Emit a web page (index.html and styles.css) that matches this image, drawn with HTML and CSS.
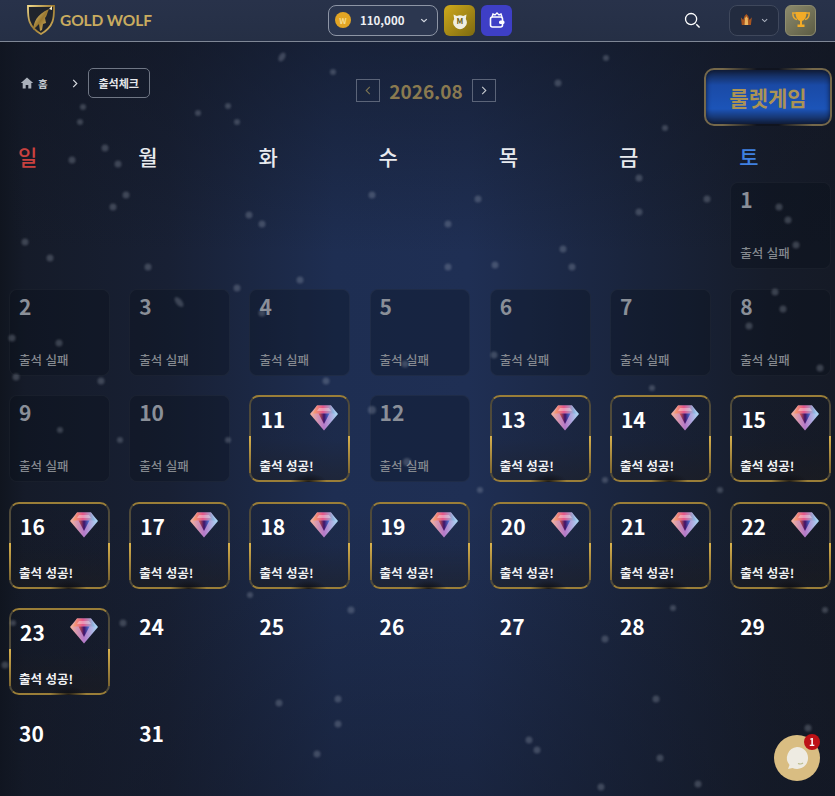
FILE: index.html
```html
<!DOCTYPE html>
<html lang="ko">
<head>
<meta charset="utf-8">
<title>출석체크</title>
<link rel="stylesheet" href="styles.css">
</head>
<body>
<header class="topbar">
  <a class="brand">
    <svg class="brand-mark" viewBox="0 0 28 32"><defs><linearGradient id="sg" x1="0" y1="0" x2="1" y2="1"><stop offset="0" stop-color="#f0d88a"/><stop offset=".5" stop-color="#9a7830"/><stop offset="1" stop-color="#e2c06a"/></linearGradient></defs><path d="M1 2h26c0 10 1 20-13 28C0 22 1 12 1 2z" fill="#20242c" stroke="url(#sg)" stroke-width="1.800"/><path d="M6 26c1-8 3-15 16-21-2 4-2 7-4 9l1 5-3 1-1 6-2 1-1-7-3 3z" fill="url(#sg)"/><path d="M22 5l3-3v4z" fill="#fff4cf"/></svg>
    <span class="brand-name">GOLD WOLF</span>
  </a>
  <div class="wallet-group">
    <div class="balance">
      <span class="coin">W</span>
      <span class="amount">110,000</span>
      <svg class="chev" viewBox="0 0 10 6"><path d="M1.500 1.200 5 4.600l3.500-3.400" fill="none" stroke="#d5dae3" stroke-width="1.500"/></svg>
    </div>
    <button class="square square-gold"><svg viewBox="0 0 20 20"><path d="M3.500 4.500l3.300 1.400A8 8 0 0 1 13.200 5.900L16.500 4.500l-.7 4.500A6.700 6.700 0 1 1 4.200 9z" fill="#f0efe2"/><text x="10" y="13.500" class="pig-m">M</text></svg></button>
    <button class="square square-blue"><svg viewBox="0 0 20 20"><path d="M5 7l1-3 2 1 2-2 2 2 2-1 1 3" fill="none" stroke="#fff" stroke-width="1.400"/><rect x="3.500" y="7" width="12" height="10" rx="2" fill="none" stroke="#fff" stroke-width="1.600"/><rect x="12" y="10.500" width="5.500" height="3.500" rx="1.500" fill="#fff"/></svg></button>
  </div>
  <div class="tools">
    <svg class="search" viewBox="0 0 18 18"><circle cx="7.500" cy="7.500" r="5.900" fill="none" stroke="#fff" stroke-width="1.400"/><path d="M13 13l3.500 3.500" stroke="#fff" stroke-width="1.600"/></svg>
    <div class="rank">
      <svg class="crown" viewBox="0 0 14 14"><path d="M1 4l2.500 3L5 2.500 7 .5l2 2L10.500 7 13 4l-1 8.500H2z" fill="#a9551f"/><path d="M5 12.500 5.500 5 7 3l1.500 2 .5 7.500z" fill="#eab560"/></svg>
      <svg class="chev" viewBox="0 0 10 6"><path d="M1.500 1.200 5 4.600l3.500-3.400" fill="none" stroke="#aeb5c2" stroke-width="1.400"/></svg>
    </div>
    <button class="square square-olive"><svg viewBox="0 0 20 20"><path d="M5 3H1.800c0 4 1.200 6 4.200 6.500M15 3h3.200c0 4-1.200 6-4.200 6.500" fill="none" stroke="#eba92c" stroke-width="1.500"/><path d="M4.500 2h11c0 5-1.500 8-4.500 9v3.500h2.500V17h-7v-2.500H9V11C6 10 4.500 7 4.500 2z" fill="#f2ab27"/></svg></button>
  </div>
</header>

<main class="page">
  <svg class="snow" viewBox="0 0 835 796" aria-hidden="true">
    <g class="flakes">
      <circle cx="83" cy="107" r="3"/><circle cx="80" cy="122" r="3"/><circle cx="198" cy="113" r="3"/><circle cx="228" cy="106" r="3"/><circle cx="237" cy="122" r="3"/><circle cx="333" cy="72" r="3"/><ellipse cx="282" cy="57" rx="3" ry="5" transform="rotate(30 282 57)"/><circle cx="606" cy="58" r="3"/><circle cx="558" cy="83" r="3.500"/><circle cx="665" cy="128" r="3"/>
      <circle cx="72" cy="160" r="3.500"/><circle cx="105" cy="148" r="3.500"/><circle cx="118" cy="164" r="3.500"/>
      <circle cx="126" cy="195" r="3.500"/><circle cx="113" cy="207" r="3.500"/><circle cx="25" cy="242" r="3.500"/><circle cx="50" cy="258" r="3.500"/><circle cx="148" cy="267" r="3.500"/><circle cx="249" cy="215" r="3.500"/><circle cx="262" cy="224" r="3.500"/><circle cx="372" cy="195" r="3.500"/><circle cx="300" cy="280" r="3.500"/><circle cx="237" cy="288" r="3.500"/><ellipse cx="179" cy="302" rx="3" ry="6" transform="rotate(-40 179 302)"/><circle cx="262" cy="313" r="3.500"/><circle cx="12" cy="338" r="3.500"/><circle cx="59" cy="343" r="3.500"/><circle cx="16" cy="377" r="3.500"/><circle cx="101" cy="381" r="3.500"/><circle cx="326" cy="381" r="3.500"/><circle cx="405" cy="364" r="3.500"/>
      <circle cx="478" cy="199" r="3.500"/><circle cx="448" cy="224" r="3.500"/><circle cx="448" cy="267" r="3.500"/><circle cx="495" cy="265" r="3.500"/><circle cx="563" cy="249" r="3.500"/><circle cx="572" cy="267" r="3.500"/><circle cx="639" cy="178" r="3.500"/><circle cx="639" cy="212" r="3.500"/><circle cx="707" cy="199" r="3.500"/><circle cx="779" cy="207" r="3.500"/><circle cx="788" cy="220" r="3.500"/><circle cx="796" cy="245" r="3.500"/><circle cx="775" cy="292" r="3.500"/><circle cx="783" cy="309" r="3.500"/><circle cx="749" cy="326" r="3.500"/><circle cx="494" cy="355" r="3.500"/><circle cx="820" cy="368" r="3.500"/><circle cx="652" cy="388" r="3"/>
      <circle cx="372" cy="410" r="4"/><circle cx="407" cy="462" r="4"/><circle cx="228" cy="440" r="3"/><circle cx="120" cy="440" r="3"/><circle cx="480" cy="490" r="3"/><circle cx="605" cy="480" r="3"/><circle cx="720" cy="490" r="3"/><circle cx="60" cy="430" r="3"/><circle cx="250" cy="595" r="3"/>
      <circle cx="351" cy="610" r="3.500"/><circle cx="123" cy="623" r="3.500"/><circle cx="5" cy="665" r="3.500"/><circle cx="279" cy="703" r="3.500"/><circle cx="338" cy="699" r="3.500"/><circle cx="338" cy="724" r="3.500"/><circle cx="317" cy="754" r="3.500"/><circle cx="13" cy="623" r="3"/>
      <circle cx="673" cy="608" r="3"/><circle cx="605" cy="639" r="3.500"/><circle cx="656" cy="699" r="3.500"/><circle cx="529" cy="740" r="3.500"/><circle cx="537" cy="750" r="3.500"/><circle cx="660" cy="758" r="3.500"/><circle cx="601" cy="787" r="3.500"/><circle cx="698" cy="784" r="3.500"/><circle cx="808" cy="728" r="3.500"/><circle cx="825" cy="610" r="3"/>
    </g>
  </svg>

  <section class="toolbar">
    <nav class="crumbs">
      <a class="crumb-home">
        <svg viewBox="0 0 14 14"><path d="M7 1.500.8 7h1.900v5.500h3V9h2.600v3.500h3V7h1.900z" fill="#aab0ba"/></svg>
        <span>홈</span>
      </a>
      <svg class="crumb-sep" viewBox="0 0 6 10"><path d="M1 1l4 4-4 4" fill="none" stroke="#d8dbe0" stroke-width="1.300"/></svg>
      <span class="crumb-current">출석체크</span>
    </nav>
    <div class="month">
      <button class="month-btn"><svg viewBox="0 0 6 10"><path d="M5 1 1 5l4 4" fill="none" stroke="#7d7452" stroke-width="1.200"/></svg></button>
      <span class="month-label">2026.08</span>
      <button class="month-btn"><svg viewBox="0 0 6 10"><path d="M1 1l4 4-4 4" fill="none" stroke="#c6c9ce" stroke-width="1.200"/></svg></button>
    </div>
    <button class="roulette">룰렛게임</button>
  </section>

  <section class="calendar">
    <div class="weekday sun">일</div><div class="weekday">월</div><div class="weekday">화</div><div class="weekday">수</div><div class="weekday">목</div><div class="weekday">금</div><div class="weekday sat">토</div>

    <div class="day blank"></div><div class="day blank"></div><div class="day blank"></div><div class="day blank"></div><div class="day blank"></div><div class="day blank"></div>
    <div class="day miss"><span class="num">1</span><span class="note">출석 실패</span></div>

    <div class="day miss"><span class="num">2</span><span class="note">출석 실패</span></div>
    <div class="day miss"><span class="num">3</span><span class="note">출석 실패</span></div>
    <div class="day miss"><span class="num">4</span><span class="note">출석 실패</span></div>
    <div class="day miss"><span class="num">5</span><span class="note">출석 실패</span></div>
    <div class="day miss"><span class="num">6</span><span class="note">출석 실패</span></div>
    <div class="day miss"><span class="num">7</span><span class="note">출석 실패</span></div>
    <div class="day miss"><span class="num">8</span><span class="note">출석 실패</span></div>

    <div class="day miss"><span class="num">9</span><span class="note">출석 실패</span></div>
    <div class="day miss"><span class="num">10</span><span class="note">출석 실패</span></div>
    <div class="day hit"><div class="hit-top"><span class="num">11</span><svg class="gem"><use href="#gem"/></svg></div><span class="note">출석 성공!</span></div>
    <div class="day miss"><span class="num">12</span><span class="note">출석 실패</span></div>
    <div class="day hit"><div class="hit-top"><span class="num">13</span><svg class="gem"><use href="#gem"/></svg></div><span class="note">출석 성공!</span></div>
    <div class="day hit"><div class="hit-top"><span class="num">14</span><svg class="gem"><use href="#gem"/></svg></div><span class="note">출석 성공!</span></div>
    <div class="day hit"><div class="hit-top"><span class="num">15</span><svg class="gem"><use href="#gem"/></svg></div><span class="note">출석 성공!</span></div>

    <div class="day hit"><div class="hit-top"><span class="num">16</span><svg class="gem"><use href="#gem"/></svg></div><span class="note">출석 성공!</span></div>
    <div class="day hit"><div class="hit-top"><span class="num">17</span><svg class="gem"><use href="#gem"/></svg></div><span class="note">출석 성공!</span></div>
    <div class="day hit"><div class="hit-top"><span class="num">18</span><svg class="gem"><use href="#gem"/></svg></div><span class="note">출석 성공!</span></div>
    <div class="day hit"><div class="hit-top"><span class="num">19</span><svg class="gem"><use href="#gem"/></svg></div><span class="note">출석 성공!</span></div>
    <div class="day hit"><div class="hit-top"><span class="num">20</span><svg class="gem"><use href="#gem"/></svg></div><span class="note">출석 성공!</span></div>
    <div class="day hit"><div class="hit-top"><span class="num">21</span><svg class="gem"><use href="#gem"/></svg></div><span class="note">출석 성공!</span></div>
    <div class="day hit"><div class="hit-top"><span class="num">22</span><svg class="gem"><use href="#gem"/></svg></div><span class="note">출석 성공!</span></div>

    <div class="day hit"><div class="hit-top"><span class="num">23</span><svg class="gem"><use href="#gem"/></svg></div><span class="note">출석 성공!</span></div>
    <div class="day open"><span class="num">24</span></div>
    <div class="day open"><span class="num">25</span></div>
    <div class="day open"><span class="num">26</span></div>
    <div class="day open"><span class="num">27</span></div>
    <div class="day open"><span class="num">28</span></div>
    <div class="day open"><span class="num">29</span></div>

    <div class="day open"><span class="num">30</span></div>
    <div class="day open"><span class="num">31</span></div>
  </section>
</main>

<button class="chat">
  <svg viewBox="0 0 46 46"><circle cx="23" cy="23" r="23" fill="#d9bd82"/><path d="M23 12a11 11 0 1 1-4.500 21l-4.500 1 1.500-4A11 11 0 0 1 23 12z" fill="#eeebe2"/><path d="M24 28.500q3 1.200 5-.5" fill="none" stroke="#b9bb8b" stroke-width="1.200"/></svg>
  <span class="chat-badge">1</span>
</button>

<svg class="defs" aria-hidden="true">
  <defs>
    <linearGradient id="g1" x1="0" y1="0" x2="1" y2="0"><stop offset="0" stop-color="#f7a56c"/><stop offset=".45" stop-color="#e5568a"/><stop offset="1" stop-color="#7fc6ee"/></linearGradient>
    <linearGradient id="g2" x1="0" y1="0" x2="1" y2="0"><stop offset="0" stop-color="#e8604f"/><stop offset=".5" stop-color="#3f1268"/><stop offset="1" stop-color="#4f7fe0"/></linearGradient>
    <linearGradient id="g3" x1="0" y1="0" x2="1" y2="0"><stop offset="0" stop-color="#f7b59a"/><stop offset=".5" stop-color="#b478c8"/><stop offset="1" stop-color="#a9def7"/></linearGradient>
    <symbol id="gem" viewBox="0 0 28 26">
      <path d="M7 .5h14L28 9 14 25.500 0 9z" fill="url(#g3)"/>
      <path d="M7 .5h14L25 8.500H3z" fill="url(#g1)"/>
      <path d="M8.500 8.500h11L14 19z" fill="url(#g2)"/>
      <path d="M9 3h10l2 3H7z" fill="#ffffff" fill-opacity=".35"/>
    </symbol>
  </defs>
</svg>
</body>
</html>
```

FILE: styles.css
```css
* { box-sizing: border-box; }

html, body {
  margin: 0;
  height: 796px;
  overflow: hidden;
  background: #141b2b;
  color: #fff;
  font-family: "Noto Sans CJK KR", "Noto Sans", sans-serif;
}

button {
  padding: 0;
  border: 0;
  font: inherit;
  color: inherit;
  background: none;
}

.defs {
  width: 0;
  height: 0;
  position: absolute;
}

/* Header */
.topbar {
  display: grid;
  grid-template-columns: 1fr auto 1fr;
  align-items: center;
  height: 42px;
  padding: 0 19px 1px 24px;
  background: linear-gradient(180deg, #28324a, #252f45);
  border-bottom: 1px solid #7f8796;
}

.brand {
  display: flex;
  align-items: center;
  gap: 5px;
  margin-left: 3px;
}

.brand-mark {
  width: 28px;
  height: 32px;
}

.brand-name {
  font-family: "Lato", sans-serif;
  font-size: 15.500px;
  font-weight: 700;
  letter-spacing: -.1px;
  color: #c9ac5f;
}

.wallet-group,
.tools {
  display: flex;
  align-items: center;
  gap: 6px;
}

.tools {
  justify-content: flex-end;
}

.balance {
  display: flex;
  align-items: center;
  width: 110px;
  height: 31px;
  padding: 0 9px 0 6px;
  border: 1px solid #8d95a5;
  border-radius: 8px;
  background: #2c3750;
}

.coin {
  display: grid;
  place-items: center;
  width: 16px;
  height: 16px;
  border-radius: 50%;
  background: #e2a524;
  color: #f7dd8e;
  font-size: 8px;
  font-weight: 700;
}

.amount {
  margin-left: 9px;
  font-size: 11.500px;
  font-weight: 700;
  color: #eef0f4;
}

.chev {
  width: 8px;
  height: 5px;
  margin-left: auto;
}

.square {
  display: grid;
  place-items: center;
  width: 31px;
  height: 31px;
  border-radius: 6px;
}

.square svg {
  width: 20px;
  height: 20px;
}

.square-gold {
  background: linear-gradient(135deg, #cfa91c, #7d6a10);
}

.pig-m {
  font-size: 8px;
  font-weight: 700;
  text-anchor: middle;
  fill: #6d5f14;
}

.square-blue {
  background: #3e3fc6;
}

.square-olive {
  background: linear-gradient(135deg, #8c8a6c, #5c5c44);
  border: 1px solid #8f8d70;
}

.search {
  width: 17px;
  height: 17px;
  margin-right: 22px;
}

.rank {
  display: flex;
  align-items: center;
  gap: 8px;
  width: 50px;
  height: 31px;
  padding: 0 10px;
  border: 1px solid #3f485c;
  border-radius: 8px;
  background: #222b3f;
}

.crown {
  width: 14px;
  height: 14px;
}

.rank .chev {
  margin-left: 0;
}

/* Page */
.page {
  position: relative;
  height: 754px;
  background:
    linear-gradient(180deg, rgba(17, 22, 35, .55) 0, rgba(17, 22, 35, 0) 28%, rgba(17, 22, 35, 0) 62%, rgba(17, 22, 35, .4) 100%),
    linear-gradient(90deg, #10151f 0, #151b29 3%, #182034 20%, #1e2e52 40%, #1f2f54 56%, #19233a 78%, #161c2a 92%, #151a26 100%);
}

.snow {
  position: absolute;
  inset: -42px 0 0 0;
  width: 835px;
  height: 796px;
  pointer-events: none;
  z-index: 2;
}

.flakes {
  fill: #b4bccc;
  fill-opacity: .26;
  filter: blur(1.200px);
}

.toolbar {
  display: grid;
  grid-template-columns: 1fr auto 1fr;
  height: 103px;
  padding: 26px 3px 0 20px;
}

.crumbs {
  display: flex;
  align-items: center;
  align-self: start;
  height: 30px;
}

.crumb-home {
  display: flex;
  align-items: center;
  gap: 4px;
  font-size: 10.500px;
  font-weight: 700;
  color: #bfc3ca;
}

.crumb-home svg {
  width: 14px;
  height: 14px;
}

.crumb-sep {
  width: 6px;
  height: 9px;
  margin: 0 10px 0 24px;
}

.crumb-current {
  display: grid;
  place-items: center;
  width: 62px;
  height: 30px;
  border: 1px solid #6f7684;
  border-radius: 5px;
  font-size: 11px;
  font-weight: 700;
  color: #e6e8ec;
}

.month {
  display: flex;
  align-items: center;
  align-self: start;
  gap: 9px;
  margin-top: 11px;
}

.month-btn {
  display: grid;
  place-items: center;
  width: 24px;
  height: 23px;
  border: 1px solid #5b6478;
}

.month-btn svg {
  width: 6px;
  height: 9px;
}

.month-label {
  font-size: 19px;
  font-weight: 700;
  line-height: 23px;
  color: #8a7a50;
}

.roulette {
  position: relative;
  justify-self: end;
  align-self: start;
  width: 128px;
  height: 58px;
  border: 2px solid #75684a;
  border-radius: 10px;
  background:
    linear-gradient(180deg, #13213f 0%, #1a4aa6 28%, #1c54b8 72%, #13213f 100%);
  box-shadow: inset 0 0 5px #0c1630;
  font-size: 21px;
  font-weight: 700;
  color: #ab9355;
}

.roulette::before {
  content: "";
  position: absolute;
  inset: -2px 14%;
  background:
    linear-gradient(90deg, transparent, #10141f 38% 62%, transparent) top / 100% 2px no-repeat,
    linear-gradient(90deg, transparent, #10141f 38% 62%, transparent) bottom / 100% 2px no-repeat;
}

/* Calendar */
.calendar {
  display: grid;
  grid-template-columns: repeat(7, 1fr);
  grid-template-rows: 17.500px;
  grid-auto-rows: 87px;
  column-gap: 19.330px;
  row-gap: 19.500px;
  padding: 0 4px 0 9px;
}

.weekday {
  margin-top: -1px;
  padding-left: 9px;
  font-size: 21px;
  font-weight: 500;
  line-height: 25px;
  color: #e8eaee;
}

.sun { color: #c8413f; }
.sat { color: #3f80e2; }

.day {
  display: flex;
  flex-direction: column;
  border-radius: 8px;
  padding: 5px 9px 0;
}

.blank {
  padding: 0;
}

.num {
  font-size: 21px;
  font-weight: 700;
  line-height: 26px;
}

.note {
  margin-top: auto;
  font-size: 12.500px;
  line-height: 16px;
}

.miss {
  padding: 3px 9px 7px;
  border: 1px solid rgba(255, 255, 255, .04);
  background: rgba(8, 12, 22, .3);
}

.miss .num {
  color: #8a8f98;
}

.miss .note {
  font-weight: 500;
  color: #85898f;
}

.open {
  padding: 5px 10px 0;
}

.hit {
  position: relative;
  padding: 7px 10px 6px 9px;
  border: 2px solid #9a7e38;
  border-left-color: #4f4a3a;
  border-right-color: #4f4a3a;
  border-radius: 10px;
  background: linear-gradient(180deg, rgba(20, 24, 36, .15) 50%, rgba(30, 28, 28, .45) 100%);
}

.hit::before {
  content: "";
  position: absolute;
  top: 47%;
  bottom: 7px;
  left: -2px;
  right: -2px;
  background:
    linear-gradient(180deg, #d9b24e, #7a6430) left / 2px 100% no-repeat,
    linear-gradient(180deg, #d9b24e, #7a6430) right / 2px 100% no-repeat;
}

.hit::after {
  content: "";
  position: absolute;
  left: 40%;
  right: 22%;
  bottom: -2px;
  height: 9px;
  background: radial-gradient(ellipse at 50% 100%, rgba(14, 14, 18, .9), transparent 70%);
}

.hit-top {
  display: flex;
  justify-content: space-between;
  align-items: flex-start;
}

.hit .num {
  margin-top: 2px;
  color: #fff;
}

.hit .note {
  margin-left: -1px;
  font-weight: 700;
  color: #f1f2f4;
}

.gem {
  width: 28px;
  height: 26px;
  margin-top: 1px;
}

/* Chat */
.chat {
  position: fixed;
  left: 774px;
  top: 735px;
  width: 46px;
  height: 46px;
  z-index: 3;
}

.chat svg {
  display: block;
  width: 46px;
  height: 46px;
}

.chat-badge {
  position: absolute;
  top: -1px;
  right: 0;
  display: grid;
  place-items: center;
  width: 16px;
  height: 16px;
  border-radius: 50%;
  background: #bd1116;
  font-size: 10px;
  font-weight: 700;
  line-height: 1;
  color: #fff;
}
```
